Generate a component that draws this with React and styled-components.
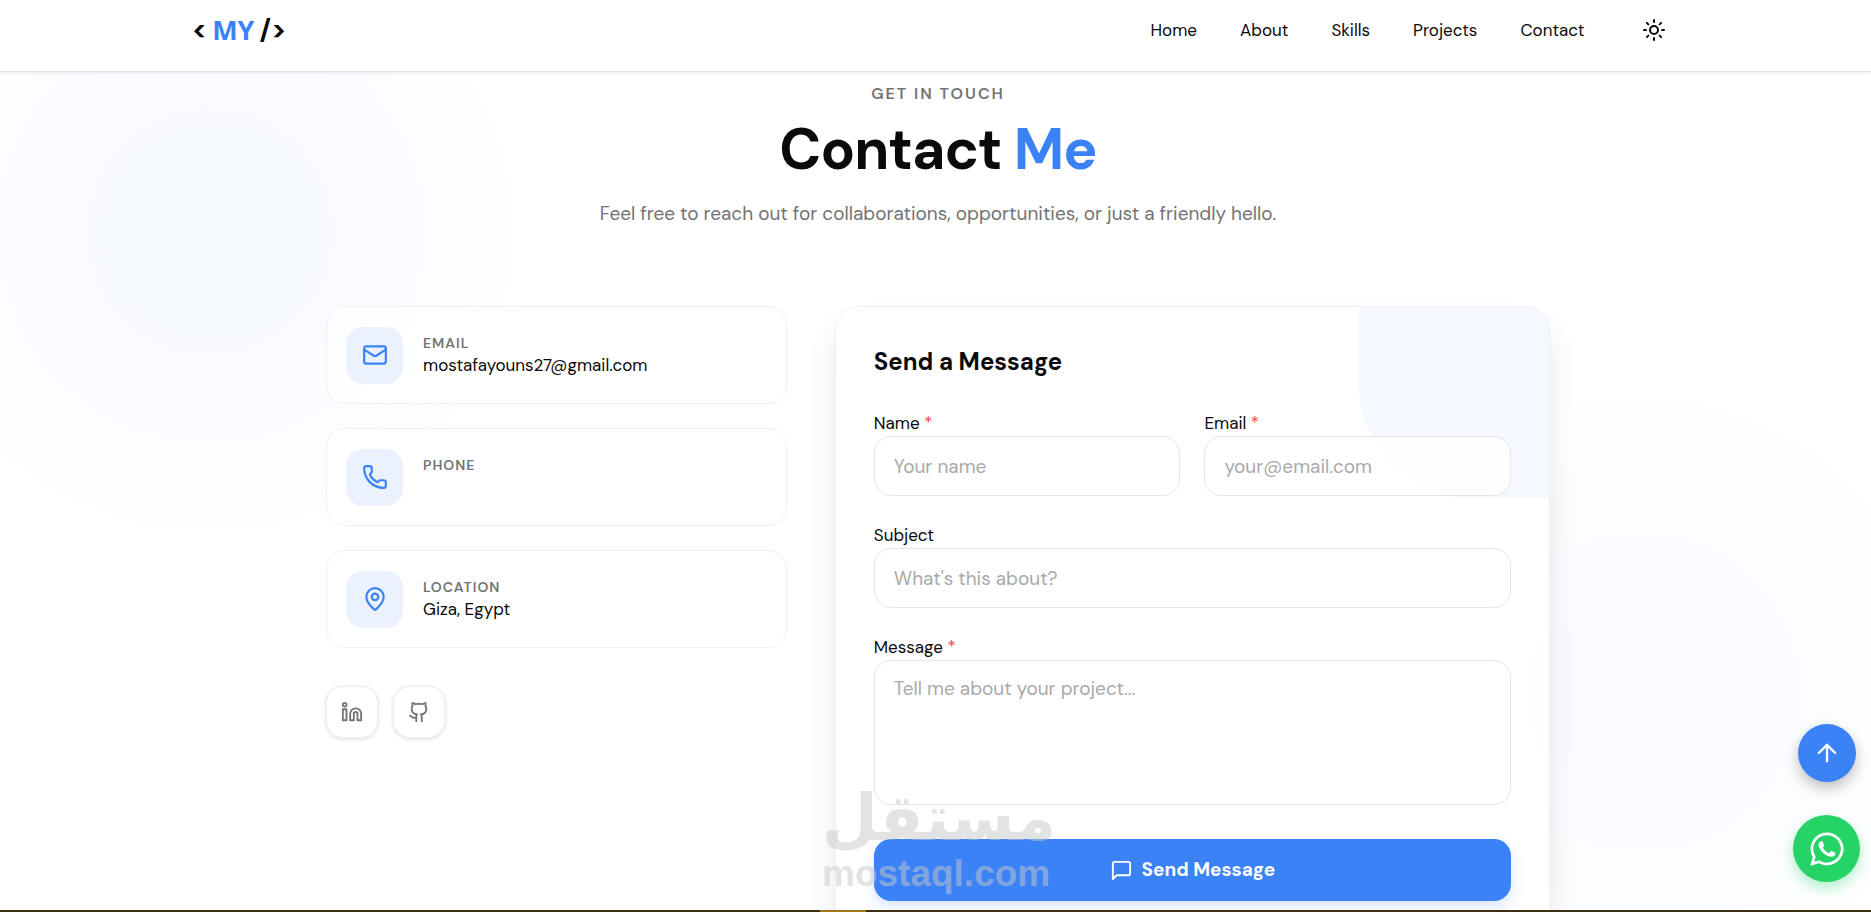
import React from 'react';
import styled, { createGlobalStyle } from 'styled-components';
import { ArrowUp, Github, Linkedin, Mail, MapPin, Phone, Sun } from 'lucide-react';
import { FaWhatsapp } from 'react-icons/fa';
import { FiMessageSquare } from 'react-icons/fi';

const blue = '#3b82f6';
const ink = '#0a0a0a';
const grey = '#737373';

const GlobalStyle = createGlobalStyle`
    * {
        box-sizing: border-box;
    }
    body {
        margin: 0;
        background: #fff;
        color: ${ink};
        font-family: 'DM Sans', Inter, sans-serif;
        font-size: 17px;
        line-height: 24px;
    }
    h1, h2, p {
        margin: 0;
    }
    a {
        color: inherit;
        text-decoration: none;
    }
    button, input, textarea {
        font: inherit;
    }
`
const Page = styled.div`
    position: relative;
    height: 100vh;
    overflow: hidden;
`
// soft blue light behind the content
const Glow = styled.div`
    position: absolute;
    z-index: -1;
    width: 640px;
    height: 640px;
    border-radius: 50%;
    background: radial-gradient(closest-side, ${props => props.$tint}, ${props => props.$tint} 25%, transparent);
    ${props => props.$right ? 'right: -90px; bottom: -100px;' : 'left: -110px; top: -90px;'}
`
// site header
const MainHeader = styled.header`
    height: 72px;
    padding-bottom: 11px;
    background: rgba(255, 255, 255, 0.9);
    border-bottom: 1px solid #e2e2e2;
    box-shadow: 0 1px 3px rgba(0, 0, 0, 0.08);
`
const HeaderBounds = styled.div`
    display: flex;
    align-items: center;
    justify-content: space-between;
    max-width: 1488px;
    height: 100%;
    margin: 0 auto;
`
const Logo = styled.a`
    display: flex;
    align-items: center;
    gap: 5px;
    font-size: 27px;
    font-weight: 700;
    span {
        color: ${blue};
        font-family: 'Open Sans', sans-serif;
    }
`
const Nav = styled.nav`
    display: flex;
    align-items: center;
    gap: 43px;
`
const ThemeButton = styled.button`
    display: flex;
    padding: 8px 14px;
    border: none;
    background: none;
    color: ${ink};
`
const Main = styled.main`
    padding: 10px 0 0 5px;
`
const MainBounds = styled.div`
    max-width: 1224px;
    margin: 0 auto;
`
const Hero = styled.div`
    text-align: center;
    margin-bottom: 76px;
`
const Eyebrow = styled.p`
    color: ${grey};
    font-size: 16px;
    font-weight: 600;
    letter-spacing: 2px;
`
const Title = styled.h1`
    margin: 8px 0 12px;
    font-size: 57px;
    line-height: 72px;
    letter-spacing: -1px;
    span {
        color: ${blue};
    }
`
const Lead = styled.p`
    color: ${grey};
    font-size: 19px;
    line-height: 32px;
`
const Columns = styled.div`
    display: grid;
    grid-template-columns: repeat(5, 1fr);
    gap: 48px;
`
const Side = styled.div`
    grid-column: span 2;
    display: flex;
    flex-direction: column;
    gap: 24px;
`
const InfoCard = styled.div`
    display: flex;
    align-items: center;
    gap: 20px;
    height: 98px;
    padding: 0 19px;
    border: 1px solid #f0f0f0;
    border-radius: 19px;
    background: rgba(255, 255, 255, 0.7);
`
const IconTile = styled.div`
    display: flex;
    align-items: center;
    justify-content: center;
    width: 57px;
    height: 57px;
    border-radius: 17px;
    background: #ebf2fe;
    color: ${blue};
`
const InfoText = styled.div`
    min-height: 44px;
`
const InfoLabel = styled.div`
    color: ${grey};
    font-size: 14px;
    font-weight: 600;
    line-height: 20px;
    letter-spacing: 1px;
`
const Socials = styled.div`
    display: flex;
    gap: 15px;
    margin-top: 14px;
`
const SocialLink = styled.a`
    display: flex;
    align-items: center;
    justify-content: center;
    width: 52px;
    height: 52px;
    border: 1px solid #f0f0f0;
    border-radius: 17px;
    background: #fff;
    box-shadow: 0 1px 4px rgba(0, 0, 0, 0.14);
    color: ${grey};
`
// contact form card
const FormShadow = styled.div`
    display: grid;
    grid-column: span 3;
    border-radius: 24px;
    box-shadow: 0 20px 30px rgba(0, 0, 0, 0.09);
`
const FormCard = styled.form`
    position: relative;
    overflow: hidden;
    display: flex;
    flex-direction: column;
    gap: 27px;
    padding: 36px 38px;
    border: 1px solid #f0f0f0;
    border-radius: 24px;
    background: rgba(255, 255, 255, 0.8);
`
const Corner = styled.div`
    position: absolute;
    top: 0;
    right: 0;
    width: 190px;
    height: 192px;
    border-bottom-left-radius: 115px;
    background: #f5f8ff;
`
const FormTitle = styled.h2`
    position: relative;
    margin: 3px 0 6px;
    font-size: 24px;
    line-height: 32px;
`
const FieldRow = styled.div`
    display: grid;
    grid-template-columns: 1fr 1fr;
    gap: 24px;
`
const Field = styled.label`
    position: relative;
    display: flex;
    flex-direction: column;
    gap: 1px;
    i {
        color: #ef4444;
        font-style: normal;
    }
    input, textarea {
        display: block;
        width: 100%;
        height: 60px;
        padding: 0 19px;
        border: 1px solid #e5e5e5;
        border-radius: 17px;
        background: rgba(255, 255, 255, 0.85);
        font-size: 19px;
        outline: none;
        resize: none;
    }
    textarea {
        height: 145px;
        padding: 16px 19px;
    }
    ::placeholder {
        color: #a9a9a9;
        opacity: 1;
    }
`
const SubmitButton = styled.button`
    display: flex;
    align-items: center;
    justify-content: center;
    gap: 9px;
    height: 62px;
    margin-top: 7px;
    border: none;
    border-radius: 17px;
    background: ${blue};
    box-shadow: 0 6px 14px rgba(59, 130, 246, 0.2);
    color: #fff;
    font-size: 19px;
    font-weight: 700;
`
// buttons that float over the page
const Floating = styled.div`
    position: absolute;
    right: 11px;
    bottom: 30px;
    display: flex;
    flex-direction: column;
    align-items: center;
    gap: 33px;
`
const RoundButton = styled.button`
    display: flex;
    align-items: center;
    justify-content: center;
    width: ${props => props.$size}px;
    height: ${props => props.$size}px;
    padding: 0;
    border: none;
    border-radius: 50%;
    background: ${props => props.$color};
    box-shadow: 0 6px 14px ${props => props.$shadow};
    color: #fff;
`
const Watermark = styled.div`
    position: absolute;
    bottom: 18px;
    left: 822px;
    color: #c9c9c9;
    opacity: 0.5;
    pointer-events: none;
    font-weight: 700;
    white-space: nowrap;
`
const WatermarkArabic = styled.div`
    font-family: 'DejaVu Sans', sans-serif;
    font-size: 64px;
    line-height: 72px;
`
const WatermarkLatin = styled.div`
    font-family: 'Liberation Sans', sans-serif;
    font-size: 37px;
    line-height: 40px;
`
const BottomStrip = styled.div`
    position: absolute;
    left: 0;
    right: 0;
    bottom: 0;
    height: 2px;
    padding-left: 820px;
    background: #3d2f12;
    &::before {
        content: '';
        display: block;
        width: 46px;
        height: 2px;
        background: #a07a18;
    }
`

const links = ['Home', 'About', 'Skills', 'Projects', 'Contact'];

const contacts = [
    { label: 'EMAIL', value: 'mostafayouns27@gmail.com', icon: Mail },
    { label: 'PHONE', value: '', icon: Phone },
    { label: 'LOCATION', value: 'Giza, Egypt', icon: MapPin },
];

const Header = () => (
    <MainHeader>
        <HeaderBounds>
            <Logo href="#home">&lt;<span>MY</span>/&gt;</Logo>
            <Nav>
                {links.map(link => (
                    <a key={link} href={`#${link.toLowerCase()}`}>{link}</a>
                ))}
                <ThemeButton type="button" aria-label="Toggle theme"><Sun size={24} /></ThemeButton>
            </Nav>
        </HeaderBounds>
    </MainHeader>
);

const ContactDetails = () => (
    <Side>
        {contacts.map(({ label, value, icon: Icon }) => (
            <InfoCard key={label}>
                <IconTile><Icon size={26} /></IconTile>
                <InfoText>
                    <InfoLabel>{label}</InfoLabel>
                    <div>{value}</div>
                </InfoText>
            </InfoCard>
        ))}
        <Socials>
            <SocialLink href="#linkedin" aria-label="LinkedIn"><Linkedin size={22} /></SocialLink>
            <SocialLink href="#github" aria-label="GitHub"><Github size={22} /></SocialLink>
        </Socials>
    </Side>
);

const ContactForm = () => (
    <FormShadow>
        <FormCard>
            <Corner />
            <FormTitle>Send a Message</FormTitle>
            <FieldRow>
                <Field>
                    <span>Name <i>*</i></span>
                    <input type="text" placeholder="Your name" />
                </Field>
                <Field>
                    <span>Email <i>*</i></span>
                    <input type="email" placeholder="your@email.com" />
                </Field>
            </FieldRow>
            <Field>
                <span>Subject</span>
                <input type="text" placeholder="What's this about?" />
            </Field>
            <Field>
                <span>Message <i>*</i></span>
                <textarea placeholder="Tell me about your project..." />
            </Field>
            <SubmitButton type="button"><FiMessageSquare size={23} /> Send Message</SubmitButton>
        </FormCard>
    </FormShadow>
);

class App extends React.Component {
    render() {
        return (
            <Page>
                <GlobalStyle />
                <Glow $tint="#f6f9ff" />
                <Glow $tint="#f9fbff" $right />
                <Header />
                <Main>
                    <MainBounds>
                        <Hero>
                            <Eyebrow>GET IN TOUCH</Eyebrow>
                            <Title>Contact <span>Me</span></Title>
                            <Lead>Feel free to reach out for collaborations, opportunities, or just a friendly hello.</Lead>
                        </Hero>
                        <Columns>
                            <ContactDetails />
                            <ContactForm />
                        </Columns>
                    </MainBounds>
                </Main>
                <Floating>
                    <RoundButton type="button" aria-label="Back to top" $size={58} $color={blue} $shadow="rgba(0, 0, 0, 0.25)">
                        <ArrowUp size={28} />
                    </RoundButton>
                    <RoundButton type="button" aria-label="WhatsApp" $size={67} $color="#25d366" $shadow="rgba(37, 211, 102, 0.35)">
                        <FaWhatsapp size={38} />
                    </RoundButton>
                </Floating>
                <Watermark>
                    <WatermarkArabic lang="ar">مستقل</WatermarkArabic>
                    <WatermarkLatin>mostaql.com</WatermarkLatin>
                </Watermark>
                <BottomStrip />
            </Page>
        );
    }
}

export default App;
